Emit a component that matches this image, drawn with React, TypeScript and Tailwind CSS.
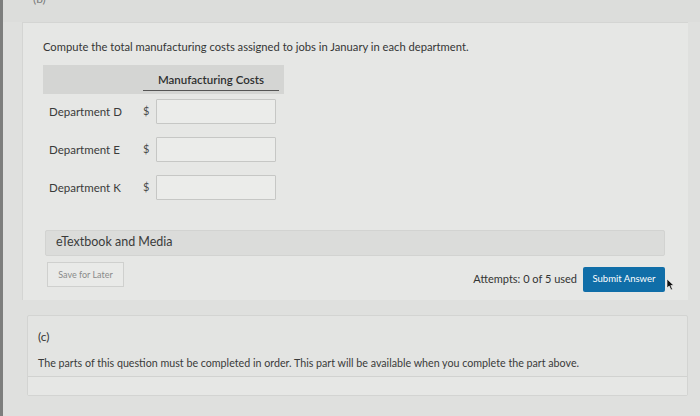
import React from "react";

const Row = ({ label }: { label: string }) => (
  <div className="flex items-center h-[25px]">
    <div className="w-[100px] pl-[6px] text-[11.5px] text-[#3a3b3a]">{label}</div>
    <div className="w-[13px] text-[11px] text-[#4a4b4a]">$</div>
    <div className="w-[120px] h-[25px] border border-[#c6c7c5] bg-[#ebecea] rounded-[1px]" />
  </div>
);

export default function App() {
  return (
    <div
      className="w-[700px] h-[416px] bg-[#dfe0de] flex overflow-hidden relative"
      style={{ fontFamily: "Lato, 'Open Sans', sans-serif" }}
    >
      <div className="w-[3px] h-full bg-[#7d7e7d]" />
      <div className="flex-1 flex flex-col">
        <div className="h-[22px] bg-[#dcdddb] relative overflow-hidden">
          <span className="absolute top-[-8px] left-[30px] text-[12px] leading-[14px] text-[#7a7b7a]">(b)</span>
        </div>
        <div className="ml-[19px] mr-[12px] h-[278px] bg-[#e6e7e5] border-l border-t border-[#d4d5d3] flex flex-col pl-[20px] pr-[20px]">
          <div className="mt-[16px] text-[11.2px] text-[#353635]">
            Compute the total manufacturing costs assigned to jobs in January in each department.
          </div>
          <div className="mt-[9px] w-[241px] h-[29px] bg-[#d4d5d3] flex items-end justify-end pr-[5px] pb-[3px]">
            <div className="w-[136px] text-center border-b border-[#555] text-[11.5px] font-semibold text-[#2f302f] pb-[2px]">
              Manufacturing Costs
            </div>
          </div>
          <div className="mt-[5px] flex flex-col gap-[13px]">
            <Row label="Department D" />
            <Row label="Department E" />
            <Row label="Department K" />
          </div>
          <div className="mt-[30px] w-[620px] h-[26px] bg-[#dbdcda] border border-[#d2d3d1] rounded-[2px] flex items-center pl-[10px] text-[12.5px] text-[#3a3b3a] ml-[2px]">
            eTextbook and Media
          </div>
          <div className="flex items-start mt-[6px] ml-[4px]">
            <div className="w-[77px] h-[25px] border border-[#cfd0ce] bg-[#e9eae8] flex items-center justify-center text-[9px] text-[#8a8b8a]">
              Save for Later
            </div>
            <div className="flex-1" />
            <div className="text-[11px] leading-[15px] text-[#333433] mt-[9px] mr-[6px]">Attempts: 0 of 5 used</div>
            <div className="w-[82px] h-[25px] bg-[#106ea8] rounded-[2px] flex items-center justify-center text-[9.5px] text-white mt-[5px] mr-[3px]">
              Submit Answer
            </div>
          </div>
        </div>
        <div className="mt-[15px] ml-[24px] mr-[12px] h-[81px] bg-[#e3e4e2] border border-[#d3d4d2] rounded-[2px] flex flex-col">
          <div className="pl-[10px] pt-[13px] text-[12px] leading-[15px] text-[#333433]">(c)</div>
          <div className="pl-[10px] pt-[12px] text-[10.7px] leading-[13px] text-[#3a3b3a]">
            The parts of this question must be completed in order. This part will be available when you complete the part above.
          </div>
          <div className="mt-[7px] flex-1 border-t border-[#d1d2d0] bg-[#e6e7e5]" />
        </div>
      </div>
      <svg className="absolute left-[666px] top-[278px]" width="9" height="13" viewBox="0 0 9 13">
        <path d="M1 1 L1 10 L3.2 8 L5 12 L6.5 11.3 L4.8 7.5 L7.8 7.5 Z" fill="#111" stroke="#fff" strokeWidth="0.6" />
      </svg>
    </div>
  );
}
